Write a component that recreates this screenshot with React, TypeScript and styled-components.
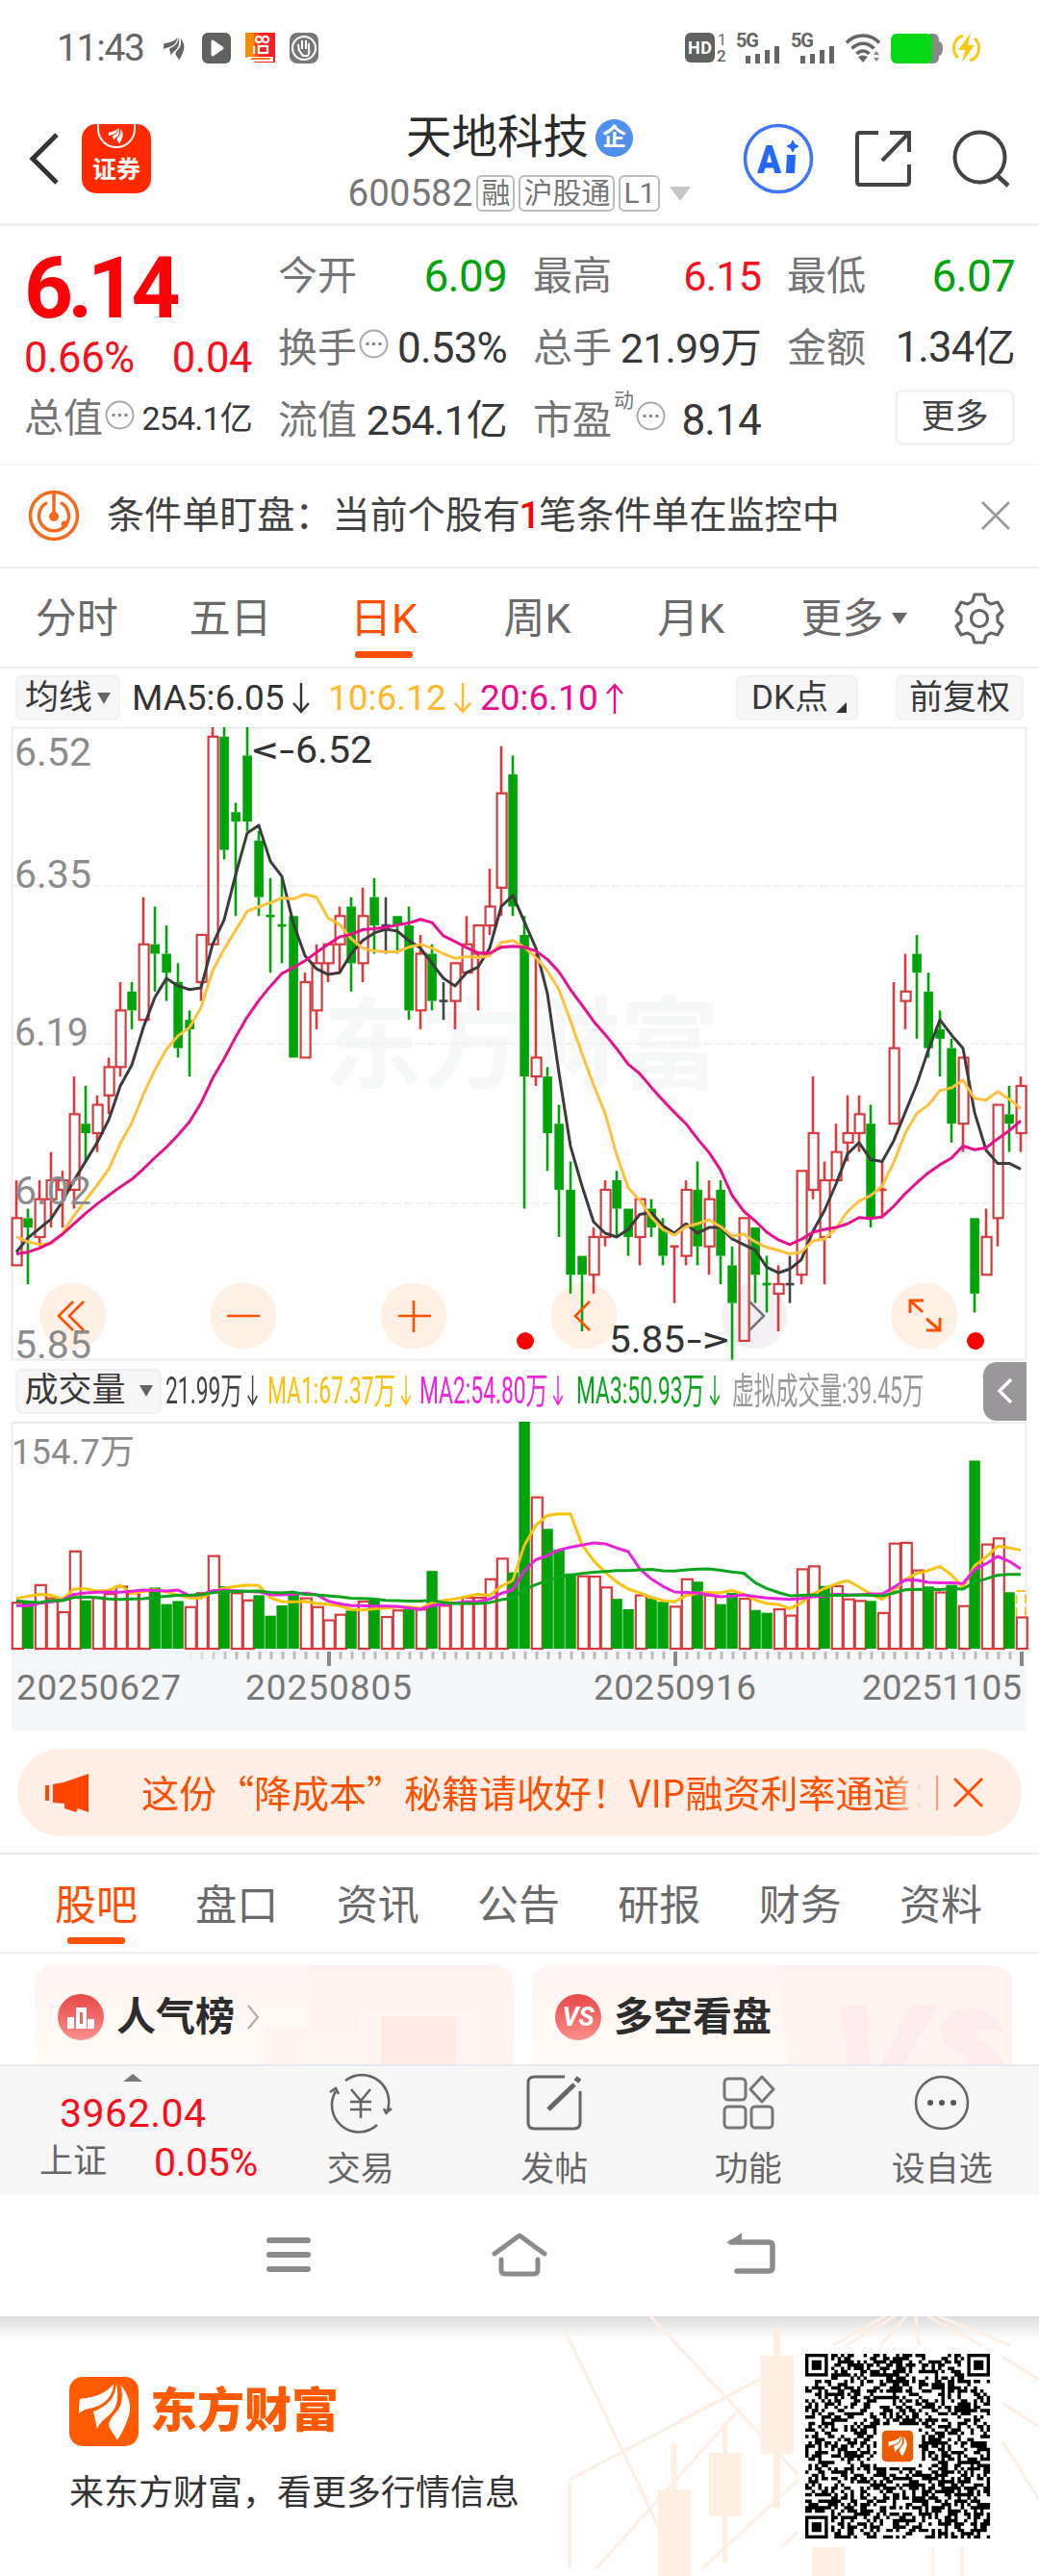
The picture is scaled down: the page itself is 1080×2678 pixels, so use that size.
import React from "react"
import styled, { createGlobalStyle } from "styled-components"

const GlobalStyle = createGlobalStyle`
* { box-sizing: border-box; }
body {
margin: 0;
background: #fefefe;
font-family: Roboto, "Noto Sans CJK SC", sans-serif;
color: #333;
}
svg { display: block; flex: none; overflow: visible; }
`

const RED = "#fb0d1b"
const GREEN = "#00a30a"
const ORANGE = "#ff4f00"

const Page = styled.div`
width: 1080px;
height: 2678px;
overflow: hidden;
display: flex;
flex-direction: column;
`

/* ---------- status bar ---------- */
const StatusBar = styled.div`
height: 98px;
padding: 2px 60px 0 59px;
display: flex;
align-items: center;
justify-content: space-between;
color: #666;
`
const StatusGroup = styled.div<{ $gap: number }>`
display: flex;
align-items: center;
gap: ${p => p.$gap}px;
`
const Clock = styled.span`
font-size: 39px;
line-height: 40px;
letter-spacing: -1.3px;
width: 92px;
`

/* ---------- header ---------- */
const Header = styled.header`
height: 137px;
padding: 0 30px 0 30px;
display: flex;
align-items: center;
justify-content: space-between;
border-bottom: 3px solid #eff1f1;
`
const HeaderSide = styled.div<{ $gap: number; $end?: boolean }>`
width: 280px;
display: flex;
align-items: center;
justify-content: ${p => (p.$end ? "flex-end" : "flex-start")};
gap: ${p => p.$gap}px;
`
const BrokerBadge = styled.div`
width: 72px;
height: 72px;
border-radius: 15px;
background: #ff2a00;
color: #fff;
font-size: 25px;
font-weight: 700;
line-height: 28px;
display: flex;
flex-direction: column;
align-items: center;
justify-content: space-between;
padding-bottom: 10px;
`
const Titles = styled.div`
display: flex;
flex-direction: column;
align-items: center;
gap: 13px;
padding-top: 9px;
`
const TitleLine = styled.div`
display: flex;
align-items: center;
gap: 7px;
font-size: 47.5px;
line-height: 50px;
color: #2b2b2b;
`
const CorpBadge = styled.span`
width: 39px;
height: 39px;
border-radius: 50%;
background: #4f8fee;
color: #fff;
font-size: 25px;
font-weight: 700;
line-height: 38px;
text-align: center;
`
const CodeLine = styled.div`
display: flex;
align-items: center;
gap: 4px;
font-size: 38.5px;
line-height: 40px;
color: #777;
`
const Tag = styled.span`
height: 38px;
padding: 0 3px;
border: 2px solid #b9bcb9;
border-radius: 6px;
font-size: 30px;
line-height: 34px;
`
const Triangle = styled.i<{ $w: number; $h: number; $color: string; $up?: boolean; $ml?: number }>`
flex: none;
width: 0;
margin-left: ${p => p.$ml || 0}px;
border-left: ${p => p.$w / 2}px solid transparent;
border-right: ${p => p.$w / 2}px solid transparent;
border-${p => (p.$up ? "bottom" : "top")}: ${p => p.$h}px solid ${p => p.$color};
`

/* ---------- quote ---------- */
const Quote = styled.section`
height: 249px;
padding: 14px 25px 0 25px;
display: grid;
grid-template-columns: 237px 238px 237px 237px;
column-gap: 27px;
border-bottom: 2px solid #f5f6f7;
`
const QuoteColumn = styled.div`
display: flex;
flex-direction: column;
`
const LastPrice = styled.div`
height: 100px;
font-size: 89px;
font-weight: 700;
line-height: 102px;
letter-spacing: -5.5px;
color: #ff0008;
`
const Change = styled.div`
height: 47px;
display: flex;
justify-content: space-between;
font-size: 43.5px;
line-height: 48px;
letter-spacing: -0.4px;
color: ${RED};
`
const Cell = styled.div<{ $h?: number }>`
height: ${p => p.$h || 75}px;
display: flex;
align-items: center;
justify-content: space-between;
`
const CellLabel = styled.span`
display: flex;
align-items: center;
font-size: 41px;
line-height: 48px;
color: #757575;
svg { margin: -8px 0 0 2px; }
`
const CellValue = styled.span<{ $color?: string; $size?: number }>`
font-size: ${p => p.$size || 43}px;
line-height: 48px;
letter-spacing: -0.8px;
white-space: nowrap;
color: ${p => p.$color || "#383838"};
`
const Sup = styled.sup`
font-size: 21px;
line-height: 22px;
align-self: flex-start;
margin: -8px 0 0 2px;
`
const MoreButton = styled.button`
width: 125px;
height: 58px;
margin-left: auto;
border: 3px solid #f1f1f3;
border-radius: 8px;
background: #fff;
font: inherit;
font-size: 35px;
line-height: 48px;
padding: 0;
color: #444;
`

/* ---------- condition order alert ---------- */
const Alert = styled.section`
height: 107px;
padding: 0 30px 2px 29px;
display: flex;
align-items: center;
border-bottom: 2px solid #eff1f1;
`
const AlertText = styled.p`
flex: 1;
margin: 0 0 0 28px;
font-size: 39.1px;
line-height: 48px;
color: #414141;
white-space: nowrap;
b { color: #ff0008; margin: 0 -1.5px; font-weight: 500; }
`

/* ---------- tabs ---------- */
const Tabs = styled.nav<{ $h: number; $pad: string }>`
height: ${p => p.$h}px;
padding: ${p => p.$pad};
display: flex;
align-items: center;
justify-content: space-between;
border-bottom: 2px solid #eceeee;
> svg { margin-left: auto; }
`
const Tab = styled.span<{ $active?: boolean; $bar?: number; $w?: number }>`
position: relative;
width: ${p => (p.$w ? `${p.$w}px` : "auto")};
display: flex;
align-items: center;
justify-content: center;
font-size: 43px;
line-height: 50px;
color: ${p => (p.$active ? ORANGE : "#6a6a6a")};
&::after {
content: "";
display: ${p => (p.$active ? "block" : "none")};
position: absolute;
left: 50%;
bottom: -${p => p.$bar || 16}px;
width: 60px;
height: 7px;
margin-left: -30px;
border-radius: 3px;
background: ${ORANGE};
}
`

/* ---------- indicator bars ---------- */
const IndicatorBar = styled.div<{ $h: number; $right: number }>`
height: ${p => p.$h}px;
padding: 0 ${p => p.$right}px 0 16px;
display: flex;
align-items: center;
`
const Chip = styled.span<{ $w: number; $ml?: string }>`
flex: none;
width: ${p => p.$w}px;
height: 47px;
margin-left: ${p => p.$ml || 0};
display: flex;
align-items: center;
justify-content: center;
border: 2px solid #eff0f4;
border-radius: 7px;
background: #f6f6f7;
font-size: 35px;
line-height: 40px;
color: #3a3a3a;
white-space: nowrap;
`
const MaValue = styled.span<{ $color: string; $w: number; $pad?: number }>`
flex: none;
width: ${p => p.$w}px;
padding-left: ${p => p.$pad || 0}px;
display: flex;
align-items: center;
gap: 8px;
font-size: 37px;
line-height: 42px;
color: ${p => p.$color};
`
const Corner = styled.i`
align-self: flex-end;
margin: 0 -4px 6px 8px;
border-left: 11px solid transparent;
border-bottom: 11px solid #333;
`
const VolValue = styled.span<{ $color: string; $w: number; $pad?: number }>`
flex: none;
width: ${p => p.$w}px;
padding-left: ${p => p.$pad || 0}px;
color: ${p => p.$color};
`
const Condensed = styled.span`
display: flex;
align-items: center;
gap: 9px;
width: max-content;
font-size: 38px;
line-height: 44px;
transform: scaleX(0.6);
transform-origin: left center;
white-space: nowrap;
`
const Handle = styled.div`
flex: none;
width: 45px;
height: 61px;
margin-left: auto;
border-radius: 14px 0 0 14px;
background: #99979a;
display: flex;
align-items: center;
justify-content: center;
`

/* ---------- promo ---------- */
const PromoWrap = styled.section`
height: 129px;
padding: 19px 18px 0;
border-bottom: 2px solid #e9edef;
`
const Promo = styled.div`
height: 91px;
padding: 0 38px 0 28px;
border-radius: 46px;
background: #ffeee6;
display: flex;
align-items: center;
`
const PromoText = styled.p`
width: 812px;
margin: -4px 0 0 53px;
overflow: hidden;
white-space: nowrap;
font-size: 39px;
line-height: 50px;
color: ${ORANGE};
font-family: "Noto Sans CJK SC", sans-serif;
mask-image: linear-gradient(90deg, #000 775px, transparent 812px);
`
const PromoLine = styled.i`
width: 2px;
height: 36px;
margin: 0 16px 0 14px;
background: #ff9d70;
`

/* ---------- cards ---------- */
const Cards = styled.section`
height: 115px;
padding: 12px 28px 0 36px;
display: grid;
grid-template-columns: 498px 499px;
column-gap: 19px;
overflow: hidden;
`
const Card = styled.article`
position: relative;
height: 150px;
padding: 30px 24px 0;
border-radius: 20px;
overflow: hidden;
background: linear-gradient(#fff4f4, #fffaf4 90px);
`
const CardArt = styled.svg`
position: absolute;
right: 0;
top: 0;
`
const CardHead = styled.div`
position: relative;
display: flex;
align-items: center;
gap: 13px;
font-size: 41px;
line-height: 48px;
font-weight: 700;
color: #2d2d2d;
`
const CardIcon = styled.span`
width: 48px;
height: 48px;
border-radius: 50%;
background: linear-gradient(#e84848, #fb8f8b);
color: #fff;
display: flex;
align-items: center;
justify-content: center;
font-size: 27px;
font-style: italic;
`

/* ---------- bottom bar ---------- */
const BottomBar = styled.nav`
height: 136px;
display: flex;
border-top: 2px solid #e6eaee;
background: #f6f6f7;
`
const IndexBox = styled.div`
width: 274px;
padding: 8px 6px 0 41px;
display: flex;
flex-direction: column;
`
const IndexValue = styled.span`
margin: 10px 0 0 21px;
font-size: 41px;
line-height: 46px;
letter-spacing: 0.5px;
color: ${RED};
`
const IndexRow = styled.div`
margin-top: 5px;
display: flex;
justify-content: space-between;
align-items: center;
font-size: 35px;
line-height: 46px;
color: #666;
em { font-style: normal; font-size: 41px; color: ${RED}; letter-spacing: -0.4px; }
`
const Action = styled.div`
width: 201.5px;
padding-top: 8px;
display: flex;
flex-direction: column;
align-items: center;
gap: 17px;
font-size: 35px;
line-height: 46px;
color: #666;
`
const SystemNav = styled.nav`
height: 126px;
padding: 0 274px 2px;
display: flex;
align-items: center;
justify-content: space-between;
`

/* ---------- footer ---------- */
const Footer = styled.footer`
position: relative;
height: 270px;
padding: 39px 51px 0 72px;
display: flex;
justify-content: space-between;
background: linear-gradient(#dcdcdc, #ebebeb 10px, #fefefe 24px);
`
const FooterArt = styled.svg`
position: absolute;
right: 0;
top: 0;
`
const Brand = styled.div`
padding-top: 24px;
`
const BrandRow = styled.div`
display: flex;
align-items: center;
gap: 12px;
font-size: 49px;
font-weight: 900;
line-height: 72px;
color: #ff5a00;
`
const Slogan = styled.p`
margin: 24px 0 0;
font-size: 36px;
line-height: 50px;
color: #333;
`
const QrBox = styled.div`
position: relative;
width: 192px;
height: 192px;
`

/* ---------- chart data ---------- */
type Kind = "r" | "g" | "k"
// kind, high, body top, body bottom, low (in cents)
const candles: [Kind, number, number, number, number][] = [
    ["r", 604, 600, 595, 595], ["g", 601, 600, 599, 593], ["r", 604, 602, 598, 597], ["r", 607, 604, 602, 599],
    ["r", 605, 604, 603, 599], ["r", 615, 611, 603, 601], ["g", 614, 610, 609, 606], ["r", 613, 612, 609, 607],
    ["r", 617, 616, 613, 611], ["r", 625, 622, 616, 615], ["g", 625, 624, 622, 620], ["r", 634, 629, 621, 621],
    ["g", 633, 629, 628, 624], ["g", 631, 628, 626, 623], ["g", 627, 625, 618, 617], ["g", 622, 621, 620, 615],
    ["r", 630, 630, 625, 623], ["r", 652, 651, 629, 629], ["g", 652, 651, 639, 638], ["g", 644, 643, 642, 632],
    ["g", 652, 649, 642, 641], ["g", 641, 640, 634, 632], ["g", 636, 632, 632, 626], ["g", 636, 631, 631, 627],
    ["g", 632, 632, 617, 617], ["r", 626, 625, 617, 617], ["r", 629, 627, 622, 620], ["r", 629, 629, 627, 625],
    ["r", 633, 632, 629, 626], ["g", 634, 633, 627, 624], ["r", 635, 632, 627, 625], ["g", 636, 634, 631, 628],
    ["k", 634, 631, 631, 628], ["g", 632, 632, 631, 628], ["g", 633, 631, 622, 621], ["r", 630, 628, 622, 620],
    ["g", 629, 628, 623, 622], ["k", 625, 623, 623, 621], ["r", 627, 627, 623, 620], ["r", 632, 629, 626, 626],
    ["r", 631, 631, 628, 622], ["r", 637, 633, 631, 630], ["r", 650, 645, 635, 632], ["g", 649, 647, 633, 632],
    ["g", 632, 630, 615, 601], ["r", 628, 617, 615, 614], ["g", 616, 615, 609, 605], ["g", 612, 610, 603, 598],
    ["g", 606, 603, 594, 592], ["g", 596, 596, 594, 588], ["r", 599, 598, 594, 592], ["r", 604, 603, 598, 597],
    ["g", 605, 604, 601, 598], ["g", 601, 601, 598, 596], ["r", 602, 602, 598, 595], ["g", 602, 601, 599, 598],
    ["g", 600, 599, 596, 595], ["r", 597, 597, 597, 591], ["r", 604, 603, 596, 595], ["g", 606, 603, 597, 595],
    ["r", 604, 602, 597, 594], ["g", 604, 603, 596, 593], ["g", 597, 595, 591, 585], ["r", 600, 600, 587, 587],
    ["g", 599, 599, 594, 591], ["g", 596, 593, 593, 590], ["r", 595, 593, 592, 588], ["k", 596, 593, 593, 591],
    ["r", 605, 605, 594, 593], ["r", 615, 609, 603, 602], ["r", 606, 604, 598, 593], ["r", 610, 607, 604, 604],
    ["r", 613, 609, 608, 606], ["r", 613, 611, 609, 607], ["g", 612, 610, 600, 599], ["r", 606, 603, 603, 600],
    ["r", 625, 618, 610, 610], ["r", 628, 624, 623, 620], ["g", 630, 628, 626, 619], ["g", 626, 624, 618, 617],
    ["g", 622, 620, 619, 615], ["g", 619, 618, 610, 608], ["r", 617, 617, 610, 607], ["g", 600, 600, 592, 590],
    ["r", 601, 598, 594, 594], ["r", 612, 612, 600, 597], ["g", 614, 611, 610, 607], ["r", 615, 614, 609, 607],
]
const volumes = [
    32, 32, 44, 35, 25.5, 67, 33, 35.5, 38, 43, 38.5, 40, 41.7, 30.4, 32.5, 29, 38.5, 63.8, 42.6, 38.5, 33.6, 36.5,
    22.5, 29.5, 38, 35, 29, 20, 23.8, 26, 32.8, 33.9, 22.3, 26.7, 27, 27.3, 53, 30, 32, 35.4, 35.4, 48, 62, 52,
    154.7, 103.8, 81.7, 67.5, 51.3, 50, 49.8, 42.4, 34, 26.9, 37, 34.3, 32, 29.3, 48, 45.7, 37, 30.4, 38, 34.7,
    26.4, 24.5, 27.5, 23.2, 54.8, 56.8, 42.8, 43.3, 34.3, 33.2, 32.6, 25, 72.3, 72.8, 54, 42.4, 39, 43.5, 29.7,
    128.2, 71.7, 75.8, 38.5, 21.99,
]
const closes = candles.map(c => (c[0] === "g" ? c[3] : c[2]))

// the first values of every average depend on days left of the window
const average = (data: number[], lead: number[]) => {
    const n = lead.length + 1
    return data.map((_, i) =>
        i < lead.length ? lead[i] : data.slice(i - n + 1, i + 1).reduce((a, b) => a + b, 0) / n)
}
const ma5 = average(closes, [596.4, 597.9, 598.9, 599.9])
const ma10 = average(closes, [598, 597.5, 597.2, 597.3, 598.4, 600.3, 601.9, 603.5, 605.2])
const ma20 = average(closes, [596.2, 596.4, 596.8, 597.4, 598.3, 599.4, 600.5, 601.5, 602.4, 603.3, 604.1, 605.2,
    606.4, 607.5, 608.8, 610.2, 612.2, 614.8, 616.9])
const vol5 = average(volumes, [34.3, 35.8, 37.1, 36.5])
const vol10 = average(volumes, [29.3, 29.3, 31, 32, 33.2, 37.1, 38, 38.5, 38.7])
const vol20 = average(volumes, [32.6, 31.9, 31.5, 32.8, 32.8, 35, 35.2, 34.7, 33.9, 33.6, 33.9, 34.1, 35, 35.8,
    36.3, 36.5, 36.9, 38.2, 39.1])

const xAt = (i: number) => 17 + i * 12
const priceY = (p: number) => (652 - p) * 9.814
const volY = (v: number) => 236 - (v / 154.7) * 236
const points = (data: number[], y: (v: number) => number) =>
    data.map((v, i) => `${xAt(i)},${y(v).toFixed(1)}`).join(" ")

const kindColor = { r: "#d93a3d", g: GREEN, k: "#444" }

const PriceChart: React.FC = () => (
    <svg width="1080" height="658" viewBox="0 0 1080 658" fontFamily='Roboto, "Noto Sans CJK SC", sans-serif'>
        <text x="336" y="368" fontSize="104" fontWeight="700" fill="#f6f7f7" textLength="412">东方财富</text>
        {[165, 329, 495].map(y => (
            <line key={y} x1="12" x2="1067" y1={y} y2={y} stroke="#f1f1f1" strokeWidth="2" strokeDasharray="9 3" />
        ))}
        <rect x="12.5" y="0.5" width="1054" height="657" fill="none" stroke="#ececee" strokeWidth="2" />
        {[76, 253, 430, 607, 784, 961].map(x => (
            <circle key={x} cx={x} cy="612" r="34.5" fill={x === 784 ? "#f4f1f5" : "#fff0e5"} />
        ))}
        {candles.map(([kind, high, top, bottom, low], i) => {
            const x = xAt(i)
            const color = kindColor[kind]
            const bodyTop = priceY(top)
            const bodyH = priceY(bottom) - bodyTop
            return (
                <g key={i} stroke={color} strokeWidth="2.6">
                    {high > top && <line x1={x} x2={x} y1={priceY(high)} y2={bodyTop} />}
                    {bottom > low && <line x1={x} x2={x} y1={bodyTop + bodyH} y2={priceY(low)} />}
                    {bodyH === 0 && <line x1={x - 4.5} x2={x + 4.5} y1={bodyTop} y2={bodyTop} />}
                    {bodyH > 0 && kind === "r" &&
                        <rect x={x - 4.4} y={bodyTop} width="10" height={bodyH} fill="none" strokeWidth="2.2" />}
                    {bodyH > 0 && kind === "g" &&
                        <rect x={x - 4.7} y={bodyTop} width="9.6" height={bodyH} fill={color} stroke="none" />}
                </g>
            )
        })}
        <g fill="none" strokeWidth="3" strokeLinejoin="round">
            <polyline points={points(ma5, priceY)} stroke="#3c3c3c" />
            <polyline points={points(ma10, priceY)} stroke="#ffc03c" />
            <polyline points={points(ma20, priceY)} stroke="#e8108c" />
        </g>
        <g fontSize="40" fill="#8c8c8c">
            <text x="15" y="40" textLength="80" lengthAdjust="spacingAndGlyphs">6.52</text>
            <text x="15" y="167" textLength="80" lengthAdjust="spacingAndGlyphs">6.35</text>
            <text x="15" y="331" textLength="77" lengthAdjust="spacingAndGlyphs">6.19</text>
            <text x="15" y="496" textLength="80" lengthAdjust="spacingAndGlyphs">6.02</text>
            <text x="15" y="656" textLength="80" lengthAdjust="spacingAndGlyphs">5.85</text>
        </g>
        <g fontSize="39" fill="#333">
            <text x="262" y="37" textLength="44" lengthAdjust="spacingAndGlyphs">&lt;-</text>
            <text x="307" y="37" textLength="80" lengthAdjust="spacingAndGlyphs">6.52</text>
            <text x="633" y="650" textLength="79" lengthAdjust="spacingAndGlyphs">5.85</text>
            <text x="714" y="650" textLength="44" lengthAdjust="spacingAndGlyphs">-&gt;</text>
        </g>
        <circle cx="546" cy="638" r="9" fill="#ff0000" />
        <circle cx="1014" cy="638" r="9" fill="#ff0000" />
        <g fill="none" stroke={ORANGE} strokeWidth="2.6">
            <path d="M76 597 61 612 76 627M87 597 72 612 87 627" />
            <path d="M236 612h34M414 612h34M430 596v33M613 597 598 612 613 627" />
            <path d="M779 597 794 612 779 627" stroke="#777" />
            <path d="M946 609v-13h14M946 596 959 608M963 615 977 627M977 614v13h-14" strokeWidth="3" />
        </g>
    </svg>
)

const VolumeChart: React.FC = () => (
    <svg width="1080" height="321" viewBox="0 0 1080 321" fontFamily='Roboto, "Noto Sans CJK SC", sans-serif'>
        <rect x="12" y="237" width="1055" height="84" fill="#f5f6f8" />
        <path d="M12.5 236V1H1066.5V236" fill="none" stroke="#ececee" strokeWidth="2" />
        {volumes.map((v, i) => {
            const up = i === 0 || closes[i] >= closes[i - 1]
            const top = volY(v)
            return up
                ? <rect key={i} x={xAt(i) - 4.2} y={top + 1} width="11" height={235 - top} fill="none" stroke="#d93a3d" strokeWidth="2.2" />
                : <rect key={i} x={xAt(i) - 5.6} y={top} width="11.4" height={236 - top} fill={GREEN} />
        })}
        <path d="M1056.5 202V176H1066V202" fill="none" stroke="#f9c21c" strokeWidth="2" strokeDasharray="9 4" />
        <g fill="none" strokeWidth="3" strokeLinejoin="round">
            <polyline points={points(vol5, volY)} stroke="#f8c30c" />
            <polyline points={points(vol10, volY)} stroke="#e823dc" />
            <polyline points={points(vol20, volY)} stroke="#0ba51e" />
        </g>
        <text x="12" y="44" fontSize="36" fill="#8c8c8c" textLength="128">154.7万</text>
        {volumes.map((_, i) => {
            const major = i % 30 === 27
            return i > 14 && (
                <line key={i} x1={xAt(i) + 1} x2={xAt(i) + 1} y1="239" y2={major ? 254 : 247}
                    stroke={major ? "#888" : "#bbb"} strokeWidth={major ? 4 : 3} opacity={i < 19 ? (i - 14) / 5 : 1} />
            )
        })}
        <g fontSize="37" fill="#777">
            <text x="17" y="289" textLength="171">20250627</text>
            <text x="255" y="289" textLength="173">20250805</text>
            <text x="617" y="289" textLength="169">20250916</text>
            <text x="896" y="289" textLength="166">20251105</text>
        </g>
    </svg>
)

/* ---------- icons ---------- */
const SwooshShape: React.FC = () => (
    <>
        <path d="M11 23C28 21 40 16 46 7 46 20 36 29 25 32 18 33 13 35 10 38 10 32 10 28 11 23Z" />
        <path d="M49 7C48 22 40 30 25 36L29 54C32 46 40 42 45 36 51 28 51 18 49 7Z" />
        <path d="M53 8C62 18 65 30 62 40 59 50 55 58 50 66 47 60 43 56 41 51 41 42 50 38 53 30 56 22 55 14 53 8Z" />
    </>
)

const Swoosh: React.FC<{ size: number; fill: string; bg?: string }> = ({ size, fill, bg }) => (
    <svg width={size} height={size} viewBox="0 0 72 72">
        {bg && <rect width="72" height="72" rx="14" fill={bg} />}
        <g fill={fill}><SwooshShape /></g>
    </svg>
)

const Dots: React.FC = () => (
    <svg width="31" height="31" viewBox="0 0 31 31">
        <circle cx="15.5" cy="15.5" r="14" fill="none" stroke="#aaa" strokeWidth="2" />
        <path d="M7.5 14h3v3h-3zM14 14h3v3h-3zM20.5 14h3v3h-3z" fill="#888" />
    </svg>
)

const Cross: React.FC<{ size: number; color: string }> = ({ size, color }) => (
    <svg width={size} height={size} viewBox="0 0 30 30">
        <path d="M1 1 29 29M29 1 1 29" stroke={color} strokeWidth="2.8" />
    </svg>
)

const Arrow: React.FC<{ up?: boolean }> = ({ up }) => (
    <svg width="18" height="32" viewBox="0 0 18 32">
        <path d={up ? "M9 32V2M1 11 9 2 17 11" : "M9 0V30M1 21 9 30 17 21"} fill="none" stroke="currentColor" strokeWidth="2.4" />
    </svg>
)

const FiveG: React.FC = () => (
    <svg width="47" height="42" viewBox="0 -5 47 42">
        <text x="0" y="15" fontSize="20" fontWeight="700" fontFamily="Roboto, sans-serif" fill="#666" textLength="24">5G</text>
        <path d="M10 24h5v8h-5zM20 22h5v10h-5zM30 18h5v14h-5zM40 14h5v18h-5z" fill="#666" />
    </svg>
)

// 57x57 modules with three finder patterns and a free centre
const QrCode: React.FC = () => {
    const n = 57
    let d = ""
    let seed = 20251
    for (let y = 0; y < n; y++) {
        for (let x = 0; x < n; x++) {
            seed = (seed * 1103515245 + 12345) % 2147483648
            const finder = (x < 8 && y < 8) || (x > n - 9 && y < 8) || (x < 8 && y > n - 9)
            const centre = Math.abs(x - 28) < 7 && Math.abs(y - 28) < 7
            if (!finder && !centre && (seed >> 12) % 100 < 51) d += `M${x} ${y}h1.03v1.03h-1.03z`
        }
    }
    return (
        <svg width="192" height="192" viewBox="0 0 57 57">
            <rect x="-2" y="-2" width="61" height="61" fill="#fff" />
            <path d={d} />
            {[[0, 0], [50, 0], [0, 50]].map(([x, y]) => (
                <g key={`${x}-${y}`}>
                    <rect x={x + 0.5} y={y + 0.5} width="6" height="6" fill="#fff" stroke="#000" />
                    <rect x={x + 2} y={y + 2} width="3" height="3" />
                </g>
            ))}
            <svg x="23.7" y="23.7" width="9.6" height="9.6" viewBox="0 0 72 72">
                <rect width="72" height="72" rx="10" fill="#ee5a00" />
                <g fill="#fff" transform="translate(7 7) scale(.8)"><SwooshShape /></g>
            </svg>
        </svg>
    )
}

const StatusIcons: React.FC = () => (
    <StatusBar>
        <StatusGroup $gap={15}>
            <Clock>11:43</Clock>
            <Swoosh size={29} fill="#666" />
            <svg width="30" height="32" viewBox="0 0 30 32">
                <rect width="30" height="32" rx="6" fill="#5f625f" />
                <path d="M11 9 21 16 11 23Z" fill="#fff" stroke="#fff" strokeWidth="3" strokeLinejoin="round" />
            </svg>
            <svg width="31" height="33" viewBox="0 0 31 33">
                <rect width="15" height="26" fill="#ff8a00" />
                <rect x="9" width="22" height="31" fill="#ff1c22" />
                <path d="M9 0H14V31H9Z" fill="#ff5312" />
                <g fill="none" stroke="#fff" strokeWidth="2.2">
                    <circle cx="14" cy="7" r="3.2" /><circle cx="21" cy="7" r="3.2" />
                    <rect x="14" y="14" width="9" height="7" /><path d="M9 14v8" />
                </g>
                <path d="M2 25h27v5H2z" fill="#fff" /><path d="M6 26h20v2H6z" fill="#ff7a22" />
            </svg>
            <svg width="30" height="32" viewBox="0 0 30 32">
                <rect width="30" height="32" rx="8" fill="#777" />
                <circle cx="15" cy="16" r="12" fill="none" stroke="#fff" strokeWidth="2" />
                <path d="M10 19 9 12M13 17V8M17 17V8M20 19V11M9 17 14 24H19Q21 21 20 17" fill="none" stroke="#fff" strokeWidth="2" />
            </svg>
        </StatusGroup>
        <StatusGroup $gap={9.5}>
            <svg width="44" height="42" viewBox="0 -5 44 42" fontFamily="Roboto, sans-serif">
                <rect width="31" height="31" rx="6" fill="#5f625f" />
                <text x="3" y="22" fontSize="18" fontWeight="700" fill="#fff" textLength="25">HD</text>
                <text x="34" y="13" fontSize="16" fill="#666">1</text>
                <text x="33" y="30" fontSize="17" fontWeight="500" fill="#666">2</text>
            </svg>
            <FiveG />
            <FiveG />
            <svg width="38" height="32" viewBox="0 0 38 32">
                <g fill="none" stroke="#666" strokeWidth="3.6">
                    <path d="M2 10.500C11 .5 27 .5 36 10.500M7.500 16.500C14 9.500 24 9.500 30.500 16.500M12.500 22C16 18 22 18 25.500 22" />
                </g>
                <path d="M14 25q5-3 10 0l-5 6z" fill="#666" />
                <path d="M30 23l3-4 3 4zM30 26l3 4 3-4z" fill="#888" />
            </svg>
            <svg width="54" height="31" viewBox="0 0 54 31">
                <path d="M40 0h4q6 0 6 7v1q4 1 4 7.500t-4 7.500v1q0 7-6 7h-4z" fill="#888" />
                <rect width="43" height="31" rx="6" fill="#05d916" />
            </svg>
            <svg width="31" height="32" viewBox="0 0 31 32">
                <path d="M12 3A13.500 13.500 0 0 0 7 26M19 29A13.500 13.500 0 0 0 24 6" fill="none" stroke="#fcc810" strokeWidth="3" />
                <path d="M20 0 7 18H14L11 31 24 13H17Z" fill="#fcc810" />
            </svg>
        </StatusGroup>
    </StatusBar>
)

const StockHeader: React.FC = () => (
    <Header>
        <HeaderSide $gap={23}>
            <svg width="32" height="54" viewBox="0 0 32 54">
                <path d="M29 2 4 27 29 52" fill="none" stroke="#333" strokeWidth="5" />
            </svg>
            <BrokerBadge>
                <svg width="42" height="26" viewBox="0 0 42 26">
                    <path d="M2 0V5A19 19 0 0 0 40 5V0" fill="none" stroke="#fff" strokeWidth="2" />
                    <g transform="translate(10 2) scale(.28)" fill="#fff"><SwooshShape /></g>
                </svg>
                证券
            </BrokerBadge>
        </HeaderSide>
        <Titles>
            <TitleLine>天地科技<CorpBadge>企</CorpBadge></TitleLine>
            <CodeLine>
                600582
                <Tag>融</Tag>
                <Tag>沪股通</Tag>
                <Tag>L1</Tag>
                <Triangle $w={22} $h={15} $color="#c6c6c6" $ml={6} />
            </CodeLine>
        </Titles>
        <HeaderSide $gap={42} $end>
            <svg width="74" height="74" viewBox="0 0 74 74">
                <circle cx="37" cy="37" r="34.500" fill="none" stroke="#3d74fb" strokeWidth="3.500" />
                <text x="15" y="52" fontSize="41" fontWeight="900" fontFamily="Roboto, sans-serif" fill="#2367fb" textLength="25" lengthAdjust="spacingAndGlyphs">A</text>
                <path d="M46 33h9l-1 19h-9z" fill="#2367fb" />
                <path d="M52 18l2 4 4 2-4 2-2 4-2-4-4-2 4-2z" fill="#2367fb" stroke="#2367fb" />
            </svg>
            <svg width="60" height="60" viewBox="0 0 60 60">
                <g fill="none" stroke="#444" strokeWidth="4">
                    <path d="M25 3H6Q3 3 3 6V54Q3 57 6 57H54Q57 57 57 54V36M37 3H57V23M56 4 29 32" />
                </g>
            </svg>
            <svg width="60" height="60" viewBox="0 0 60 60">
                <circle cx="28.500" cy="28.500" r="26" fill="none" stroke="#444" strokeWidth="4" />
                <path d="M46 47 58 58" stroke="#444" strokeWidth="4.500" />
            </svg>
        </HeaderSide>
    </Header>
)

const periods = ["分时", "五日", "日K", "周K", "月K"]
const sections = ["股吧", "盘口", "资讯", "公告", "研报", "财务", "资料"]

const App: React.FC = () => (
    <Page>
        <GlobalStyle />
        <StatusIcons />
        <StockHeader />
        <Quote>
            <QuoteColumn>
                <LastPrice>6.14</LastPrice>
                <Change><span>0.66%</span><span>0.04</span></Change>
                <Cell $h={78}><CellLabel>总值<Dots /></CellLabel><CellValue $size={34}>254.1亿</CellValue></Cell>
            </QuoteColumn>
            <QuoteColumn>
                <Cell><CellLabel>今开</CellLabel><CellValue $color={GREEN} $size={46}>6.09</CellValue></Cell>
                <Cell><CellLabel>换手<Dots /></CellLabel><CellValue $size={44}>0.53%</CellValue></Cell>
                <Cell><CellLabel>流值</CellLabel><CellValue>254.1亿</CellValue></Cell>
            </QuoteColumn>
            <QuoteColumn>
                <Cell><CellLabel>最高</CellLabel><CellValue $color={RED}>6.15</CellValue></Cell>
                <Cell><CellLabel>总手</CellLabel><CellValue>21.99万</CellValue></Cell>
                <Cell><CellLabel>市盈<Sup>动</Sup><Dots /></CellLabel><CellValue $size={44}>8.14</CellValue></Cell>
            </QuoteColumn>
            <QuoteColumn>
                <Cell><CellLabel>最低</CellLabel><CellValue $color={GREEN} $size={46}>6.07</CellValue></Cell>
                <Cell><CellLabel>金额</CellLabel><CellValue $size={43.5}>1.34亿</CellValue></Cell>
                <Cell $h={69}><MoreButton>更多</MoreButton></Cell>
            </QuoteColumn>
        </Quote>
        <Alert>
            <svg width="54" height="54" viewBox="0 0 54 54">
                <g fill="none" stroke="#f76a1c" strokeWidth="3.500">
                    <circle cx="27" cy="27" r="24.500" />
                    <path d="M20 13.500A15.500 15.500 0 1 0 34 13.500" />
                    <path d="M27 3V27" />
                </g>
                <circle cx="27" cy="28" r="5" fill="#f76a1c" />
                <circle cx="38" cy="36" r="3.500" fill="#f76a1c" />
            </svg>
            <AlertText>条件单盯盘：当前个股有<b>1</b>笔条件单在监控中</AlertText>
            <Cross size={30} color="#999" />
        </Alert>
        <Tabs $h={104} $pad="2px 35px 0 0">
            {periods.map(name => <Tab key={name} $w={159.6} $active={name === "日K"}>{name}</Tab>)}
            <Tab $w={180}>更多<Triangle $w={16} $h={12} $color="#666" $ml={9} /></Tab>
            <svg width="54" height="54" viewBox="0 0 54 54" fill="none" stroke="#666" strokeWidth="3.200" strokeLinejoin="round">
                <path d="M22 2H32L34 9 39 12 46 10 51 19 46 24V30L51 35 46 44 39 42 34 45 32 52H22L20 45 15 42 8 44 3 35 8 30V24L3 19 8 10 15 12 20 9Z" />
                <circle cx="27" cy="27" r="8.500" />
            </svg>
        </Tabs>
        <IndicatorBar $h={61} $right={16}>
            <Chip $w={109}>均线<Triangle $w={14} $h={12} $color="#666" $ml={5} /></Chip>
            <MaValue $color="#333" $w={216} $pad={12}>MA5:6.05<Arrow /></MaValue>
            <MaValue $color="#ffb92a" $w={158}>10:6.12<Arrow /></MaValue>
            <MaValue $color="#ec0a8c" $w={160}>20:6.10<Arrow up /></MaValue>
            <Chip $w={127} $ml="auto">DK点<Corner /></Chip>
            <Chip $w={133} $ml="39px">前复权</Chip>
        </IndicatorBar>
        <PriceChart />
        <IndicatorBar $h={64} $right={13}>
            <Chip $w={152}>成交量<Triangle $w={15} $h={12} $color="#666" $ml={14} /></Chip>
            <VolValue $color="#444" $w={110} $pad={4}><Condensed>21.99万<Arrow /></Condensed></VolValue>
            <VolValue $color="#f9c20a" $w={158}><Condensed>MA1:67.37万<Arrow /></Condensed></VolValue>
            <VolValue $color="#ee22e0" $w={163}><Condensed>MA2:54.80万<Arrow /></Condensed></VolValue>
            <VolValue $color="#0aa51c" $w={162}><Condensed>MA3:50.93万<Arrow /></Condensed></VolValue>
            <VolValue $color="#999" $w={200}><Condensed>虚拟成交量:39.45万</Condensed></VolValue>
            <Handle>
                <svg width="16" height="28" viewBox="0 0 16 28">
                    <path d="M14 2 2 14 14 26" fill="none" stroke="#fff" strokeWidth="3.500" />
                </svg>
            </Handle>
        </IndicatorBar>
        <VolumeChart />
        <PromoWrap>
            <Promo>
                <svg width="48" height="40" viewBox="0 0 48 40" fill="#ff4500">
                    <path d="M1 12h4v16H1zM9 11 20 9 46 0V40L35 36 33 40 21 36V31L9 30Z" />
                </svg>
                <PromoText>这份“降成本”秘籍请收好！VIP融资利率通道：</PromoText>
                <PromoLine />
                <Cross size={31} color={ORANGE} />
            </Promo>
        </PromoWrap>
        <Tabs $h={103} $pad="5px 59px 0 57px">
            {sections.map(name => <Tab key={name} $bar={15} $active={name === "股吧"}>{name}</Tab>)}
        </Tabs>
        <Cards>
            <Card>
                <CardArt width="260" height="110" viewBox="0 0 260 110">
                    <path d="M46 0H260V110H0V65H46Z" fill="#fff0ec" opacity=".6" />
                    <path d="M100 48H220V110H36V80H100Z" fill="#fff6f4" />
                    <rect x="122" y="53" width="78" height="57" fill="#ffe4de" opacity=".7" />
                </CardArt>
                <CardHead>
                    <CardIcon>
                        <svg width="30" height="28" viewBox="0 0 30 28" fill="#fff">
                            <path d="M1 14h7v12H1zM22 16h7v10h-7zM10 4h11v22H10z" />
                            <path d="M15.500 9v12" stroke="#ee6462" strokeWidth="3" />
                        </svg>
                    </CardIcon>
                    人气榜
                    <svg width="13" height="26" viewBox="0 0 13 26">
                        <path d="M1 1 11 13 1 25" fill="none" stroke="#aaa" strokeWidth="2" />
                    </svg>
                </CardHead>
            </Card>
            <Card>
                <CardArt width="245" height="110" viewBox="0 0 245 110">
                    <path d="M0 0H245V110H14Z" fill="#fff0ec" opacity=".6" />
                    <path d="M66 42H94L98 110H76ZM140 42H168L128 110H106ZM236 70Q222 38 190 46 160 58 176 84 200 92 206 110H238Q234 84 206 76 206 62 236 70Z" fill="#ffebec" />
                </CardArt>
                <CardHead><CardIcon>VS</CardIcon>多空看盘</CardHead>
            </Card>
        </Cards>
        <BottomBar>
            <IndexBox>
                <Triangle $w={20} $h={8} $color="#777" $up $ml={87} />
                <IndexValue>3962.04</IndexValue>
                <IndexRow>上证<em>0.05%</em></IndexRow>
            </IndexBox>
            <Action>
                <svg width="66" height="60" viewBox="0 0 66 60" fill="none" stroke="#666" strokeWidth="2.600">
                    <path d="M17 7A28 28 0 0 1 60 40L65 36M60 42 57 36M50 53A28 28 0 0 1 7 18M1 19 7 15 10 21" />
                    <path d="M23 16 33 28 43 16M33 28V46M22 29H44M22 37H44" />
                </svg>
                交易
            </Action>
            <Action>
                <svg width="58" height="60" viewBox="0 0 58 60" fill="none" stroke="#666" strokeWidth="3">
                    <path d="M40 3H9Q2 3 2 9V51Q2 57 9 57H49Q56 57 56 51V18" />
                    <path d="M50 11 23 37" strokeWidth="5" /><path d="M52 8 55 4" strokeWidth="6" />
                </svg>
                发帖
            </Action>
            <Action>
                <svg width="56" height="60" viewBox="0 0 56 60" fill="none" stroke="#777" strokeWidth="3">
                    <rect x="3" y="5" width="22" height="22" rx="4" />
                    <rect x="3" y="34" width="22" height="22" rx="4" />
                    <rect x="31" y="34" width="22" height="22" rx="4" />
                    <path d="M42 3 54 16 42 29 30 16Z" strokeLinejoin="round" />
                </svg>
                功能
            </Action>
            <Action>
                <svg width="58" height="60" viewBox="0 0 58 60">
                    <circle cx="29" cy="30" r="27" fill="none" stroke="#666" strokeWidth="2.600" />
                    <g fill="#555"><circle cx="17" cy="30" r="3" /><circle cx="29" cy="30" r="3" /><circle cx="41" cy="30" r="3" /></g>
                </svg>
                设自选
            </Action>
        </BottomBar>
        <SystemNav>
            <svg width="50" height="44" viewBox="0 0 50 44" stroke="#8b8b8b" strokeWidth="6" strokeLinecap="round">
                <path d="M6 7H46M6 22H46M6 37H46" />
            </svg>
            <svg width="60" height="46" viewBox="0 0 60 46" fill="none" stroke="#8b8b8b" strokeWidth="5" strokeLinecap="round" strokeLinejoin="round">
                <path d="M4 22 30 3 56 22M11 28V39Q11 43 16 43H44Q49 43 49 39V28" />
            </svg>
            <svg width="50" height="44" viewBox="0 0 50 44" fill="none" stroke="#8b8b8b" strokeWidth="5.500">
                <path d="M4 9H43Q47 9 47 13V35Q47 39 43 39H10" strokeLinecap="round" /><path d="M2 9 14 1V9Z" fill="#8b8b8b" strokeWidth="2" />
            </svg>
        </SystemNav>
        <Footer>
            <FooterArt width="500" height="270" viewBox="0 0 500 270">
                <g fill="none" stroke="#feeee3" strokeWidth="3">
                    <path d="M96 0 250 165M8 16 110 230M12 170 220 60M12 172V262M40 262 190 95M150 262 250 170" />
                    <path d="M340 0 286 30M350 0 300 30M362 0 335 30M372 0 375 30M384 0 440 30M395 0 470 30M462 42 500 66M462 90 500 115M462 130 500 190M260 215 232 240M420 270V240M390 270V240" />
                </g>
                <g fill="#ffefe3">
                    <rect x="104" y="180" width="34" height="90" /><rect x="118" y="132" width="5" height="50" />
                    <rect x="157" y="142" width="34" height="66" /><rect x="171" y="110" width="5" height="146" />
                    <rect x="211" y="41" width="34" height="102" /><rect x="224" y="12" width="7" height="187" />
                    <rect x="264" y="240" width="34" height="30" />
                </g>
            </FooterArt>
            <Brand>
                <BrandRow><Swoosh size={72} fill="#fff" bg="#ff5a00" />东方财富</BrandRow>
                <Slogan>来东方财富，看更多行情信息</Slogan>
            </Brand>
            <QrBox><QrCode /></QrBox>
        </Footer>
    </Page>
)

export default App
